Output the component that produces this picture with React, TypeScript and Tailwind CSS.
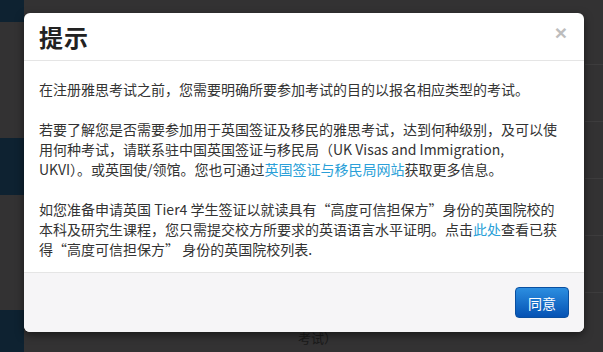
import React from "react";

const FONT = { fontFamily: '"Microsoft YaHei", "Noto Sans CJK SC", "Noto Sans", sans-serif' };

function Link({ children }: { children: React.ReactNode }) {
  return <a className="text-[#2a9fd8] no-underline">{children}</a>;
}

export default function App() {
  return (
    <div className="relative w-[603px] h-[352px] overflow-hidden bg-[#333233] flex" style={FONT}>
      {/* page behind the overlay */}
      <div className="w-[24px] flex flex-col">
        <div className="h-[22px] bg-[#0e2231]" />
        <div className="h-[116px]" />
        <div className="h-[57px] bg-[#0e2231]" />
        <div className="h-[115px]" />
        <div className="flex-1 bg-[#0e2231]" />
      </div>
      <div className="flex-1 flex flex-col">
        <div className="flex-1" />
        <div className="h-[24px] pl-[274px] text-[13px] text-[#1a1a1a]">考试）</div>
      </div>
      <div className="w-[18px] flex flex-col pt-[64px] gap-[56px]">
        <div className="h-px bg-[#3d3c3d]" />
        <div className="h-px bg-[#3d3c3d]" />
        <div className="h-px bg-[#3d3c3d]" />
        <div className="h-px bg-[#3d3c3d]" />
        <div className="h-px bg-[#3d3c3d]" />
      </div>

      {/* modal */}
      <div className="absolute left-[24px] top-[13px] w-[560px] rounded-[6px] bg-white overflow-hidden shadow-[0_3px_9px_rgba(0,0,0,0.5)]">
        <div className="flex items-center justify-between h-[48px] pl-[15px] pr-[17px] border-b border-[#e5e5e5]">
          <h4 className="text-[24px] font-bold leading-none text-[#222] tracking-[1px]">提示</h4>
          <span
            className="text-[21px] font-bold leading-none text-[#bdbdbd] -mt-[8px]"
            style={{ fontFamily: '"Liberation Sans", Arial, sans-serif' }}
          >
            ×
          </span>
        </div>
        <div className="px-[15px] pt-[18px] pb-[13px] text-[14px] leading-[20px] text-[#333] whitespace-nowrap">
          <p>在注册雅思考试之前，您需要明确所要参加考试的目的以报名相应类型的考试。</p>
          <p className="mt-[20px]">
            若要了解您是否需要参加用于英国签证及移民的雅思考试，达到何种级别，及可以使
            <br />
            用何种考试，请联系驻中国英国签证与移民局（UK Visas and Immigration,
            <br />
            UKVI）。或英国使/领馆。您也可通过<Link>英国签证与移民局网站</Link>获取更多信息。
          </p>
          <p className="mt-[20px]">
            如您准备申请英国 Tier4 学生签证以就读具有“高度可信担保方”身份的英国院校的
            <br />
            本科及研究生课程，您只需提交校方所要求的英语语言水平证明。点击<Link>此处</Link>查看已获
            <br />
            得“高度可信担保方” 身份的英国院校列表.
          </p>
        </div>
        <div className="flex justify-end h-[60px] pt-[14px] pr-[15px] bg-[#f6f5f7] border-t border-[#e5e5e5]">
          <button className="h-[31px] w-[54px] rounded-[4px] border border-[#0a4fa0] bg-gradient-to-b from-[#2c8ee0] to-[#0652b4] text-white text-[14px] leading-none">
            同意
          </button>
        </div>
      </div>
    </div>
  );
}
